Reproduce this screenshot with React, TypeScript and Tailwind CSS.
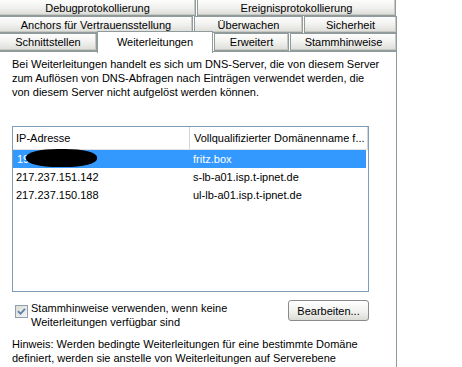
import React from "react";

const tabBase =
  "flex items-center justify-center border border-[#919b9c] bg-gradient-to-b from-[#fdfdfd] via-[#f1f1ef] to-[#dcdcd8] text-black shadow-[inset_-1px_-1px_0_#c9c9c4]";

function Tab({ w, label }: { w: string; label: string }) {
  return <div className={`${tabBase} ${w} h-full`}>{label}</div>;
}

export default function App() {
  return (
    <div
      className="relative w-[462px] h-[367px] overflow-hidden bg-white text-[11px] leading-[14px] text-black"
      style={{ fontFamily: '"Liberation Sans", Arial, sans-serif' }}
    >
      <div className="w-[397px]">
        {/* Row 1 */}
        <div className="flex h-[17px] -mt-[1px] gap-[1px]">
          <Tab w="w-[197px] -ml-[1px]" label="Debugprotokollierung" />
          <Tab w="w-[199px]" label="Ereignisprotokollierung" />
        </div>
        {/* Row 2 */}
        <div className="flex h-[17px] gap-[1px]">
          <Tab w="w-[194px] -ml-[1px]" label="Anchors für Vertrauensstellung" />
          <Tab w="w-[109px]" label="Überwachen" />
          <Tab w="w-[93px]" label="Sicherheit" />
        </div>
        {/* Row 3 */}
        <div className="relative flex h-[18px] gap-[1px]">
          <Tab w="w-[98px] -ml-[1px]" label="Schnittstellen" />
          <div className="w-[115px]" />
          <Tab w="w-[75px]" label="Erweitert" />
          <Tab w="w-[107px]" label="Stammhinweise" />
          <div className="absolute left-[97px] top-[-2px] z-10 flex h-[22px] w-[116px] items-start justify-center border-x border-t border-[#919b9c] bg-white pt-[3px]">
            Weiterleitungen
          </div>
        </div>

        {/* Panel */}
        <div className="h-[320px] border-r border-t border-[#919b9c] bg-white">
          <div className="pl-[12px] pr-[20px] pt-[5px]">
            <p className="w-[370px]">
              Bei Weiterleitungen handelt es sich um DNS-Server, die von diesem Server zum
              Auflösen von DNS-Abfragen nach Einträgen verwendet werden, die von diesem
              Server nicht aufgelöst werden können.
            </p>
          </div>

          {/* List box */}
          <div className="ml-[12px] mt-[27px] h-[166px] w-[357px] border border-[#7f9db9] bg-white">
            <div className="flex h-[23px] items-stretch border-b border-[#e2e2e2]">
              <div className="flex w-[177px] items-center border-r border-[#d5d5d5] pl-[3px]">
                IP-Adresse
              </div>
              <div className="flex w-[178px] items-center border-r border-[#d5d5d5] pl-[4px]">
                Vollqualifizierter Domänenname f...
              </div>
            </div>
            <div className="flex h-[18px] w-[353px] items-center bg-[#3399ff] text-white">
              <div className="relative w-[177px] pl-[4px]">
                19
                <span className="absolute left-[13px] top-[-3px] h-[18px] w-[71px] rounded-[45%] bg-black" />
              </div>
              <div className="pl-[3px]">fritz.box</div>
            </div>
            <div className="flex h-[18px] items-center">
              <div className="w-[177px] pl-[3px]">217.237.151.142</div>
              <div className="pl-[3px]">s-lb-a01.isp.t-ipnet.de</div>
            </div>
            <div className="flex h-[18px] items-center">
              <div className="w-[177px] pl-[3px]">217.237.150.188</div>
              <div className="pl-[3px]">ul-lb-a01.isp.t-ipnet.de</div>
            </div>
          </div>

          {/* Checkbox + button */}
          <div className="mt-[8px] flex w-[369px] items-start pl-[15px]">
            <div className="mt-[5px] flex h-[13px] w-[13px] items-center justify-center border border-[#8f9db5] bg-gradient-to-br from-[#dcdcd6] to-[#f4f4f2]">
              <svg width="9" height="9" viewBox="0 0 9 9">
                <path d="M1 4.2 L3.5 6.8 L8 1.8" fill="none" stroke="#5a7fb0" strokeWidth="1.8" />
              </svg>
            </div>
            <div className="ml-[3px] mt-[1px] flex-1 leading-[14px]">
              Stammhinweise verwenden, wenn keine
              <br />
              Weiterleitungen verfügbar sind
            </div>
            <div className="flex h-[21px] w-[81px] items-center justify-center rounded-[3px] border border-[#8a8a8a] bg-gradient-to-b from-[#ffffff] via-[#f3f3f1] to-[#dcdcd6]">
              Bearbeiten...
            </div>
          </div>

          <div className="mt-[8px] pl-[12px]">
            <p className="w-[370px]">
              Hinweis: Werden bedingte Weiterleitungen für eine bestimmte Domäne definiert,
              werden sie anstelle von Weiterleitungen auf Serverebene verwendet. Um bedingte
              Weiterleitungen anzuzeigen oder zu bearbeiten, navigieren Sie zum Ordner.
            </p>
          </div>
        </div>
      </div>
    </div>
  );
}
